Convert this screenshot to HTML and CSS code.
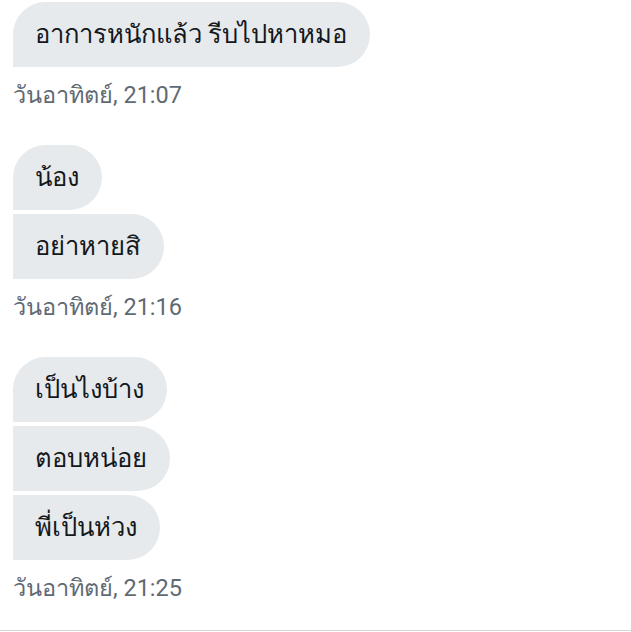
FILE: index.html
```html
<!DOCTYPE html>
<html lang="th">
<head>
<meta charset="utf-8">
<link rel="stylesheet" href="styles.css">
</head>
<body>
<div class="chat">
  <div class="group">
    <div class="bubble first">อาการหนักแล้ว รีบไปหาหมอ</div>
    <div class="time">วันอาทิตย์, 21:07</div>
  </div>
  <div class="group">
    <div class="bubble first">น้อง</div>
    <div class="bubble">อย่าหายสิ</div>
    <div class="time">วันอาทิตย์, 21:16</div>
  </div>
  <div class="group">
    <div class="bubble first">เป็นไงบ้าง</div>
    <div class="bubble">ตอบหน่อย</div>
    <div class="bubble">พี่เป็นห่วง</div>
    <div class="time">วันอาทิตย์, 21:25</div>
  </div>
</div>
</body>
</html>
```
FILE: styles.css
```css
html, body {
  margin: 0;
  padding: 0;
  background: #ffffff;
}
body {
  width: 631px;
  height: 632px;
  overflow: hidden;
  font-family: Roboto, sans-serif;
}
.chat {
  height: 631px;
  border-bottom: 1px solid #d3d7da;
  padding: 2px 13px 0;
  box-sizing: border-box;
  display: flex;
  flex-direction: column;
  gap: 35px;
}
.group {
  display: flex;
  flex-direction: column;
  align-items: flex-start;
  gap: 4px;
}
.bubble {
  background: #e6eaed;
  color: #14181c;
  font-size: 25.6px;
  height: 65px;
  line-height: 65px;
  padding: 0 23px 0 22px;
  box-sizing: border-box;
  border-radius: 0 33px 33px 0;
}
.bubble.first {
  border-top-left-radius: 33px;
}
.time {
  margin-top: 9px;
  color: #5f6a74;
  font-size: 23.5px;
  line-height: 30px;
}
```
